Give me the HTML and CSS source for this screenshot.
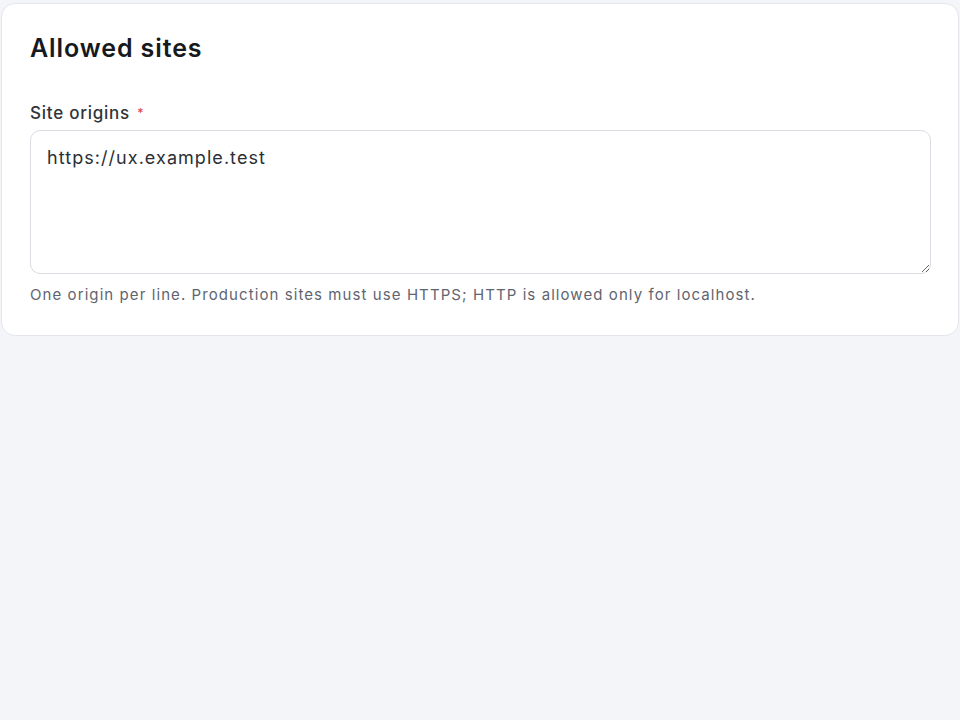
FILE: index.html
```html
<!DOCTYPE html>
<html lang="en">
<head>
<meta charset="utf-8">
<title>Allowed sites</title>
<link rel="stylesheet" href="styles.css">
</head>
<body>
<section class="card">
  <h2 class="card-title">Allowed sites</h2>
  <div class="field">
    <label class="field-label" for="origins">Site origins <span class="req">*</span></label>
    <textarea id="origins" class="field-input">https://ux.example.test</textarea>
    <p class="field-help">One origin per line. Production sites must use HTTPS; HTTP is allowed only for localhost.</p>
  </div>
</section>
</body>
</html>
```
FILE: styles.css
```css
html, body {
  margin: 0;
  background: #f3f5f9;
}
body {
  padding: 3px 1px;
  font-family: Inter, "Noto Sans", sans-serif;
  color: #1f2329;
}
.card {
  background: #ffffff;
  border: 1px solid #e3e6eb;
  border-radius: 14px;
  padding: 28px 27px 29px 28px;
}
.card-title {
  margin: 0 0 36px;
  font-size: 25px;
  line-height: 32px;
  font-weight: 600;
  letter-spacing: 0.9px;
  color: #16191d;
}
.field {
  display: flex;
  flex-direction: column;
}
.field-label {
  font-size: 17px;
  line-height: 22px;
  font-weight: 500;
  letter-spacing: 0.75px;
  color: #30343a;
  margin-top: 2px;
  margin-bottom: 6px;
}
.req {
  color: #e0484f;
  font-size: 12px;
  vertical-align: top;
  margin-left: 2px;
}
.field-input {
  box-sizing: border-box;
  height: 144px;
  border: 1px solid #d9dce1;
  border-radius: 10px;
  padding: 14px 16px;
  font-family: inherit;
  font-size: 18px;
  line-height: 26px;
  letter-spacing: 1.05px;
  color: #2b2f35;
  resize: vertical;
}
.field-help {
  margin: 10px 0 0;
  font-size: 15px;
  line-height: 22px;
  letter-spacing: 1.08px;
  color: #5f6570;
}
```
